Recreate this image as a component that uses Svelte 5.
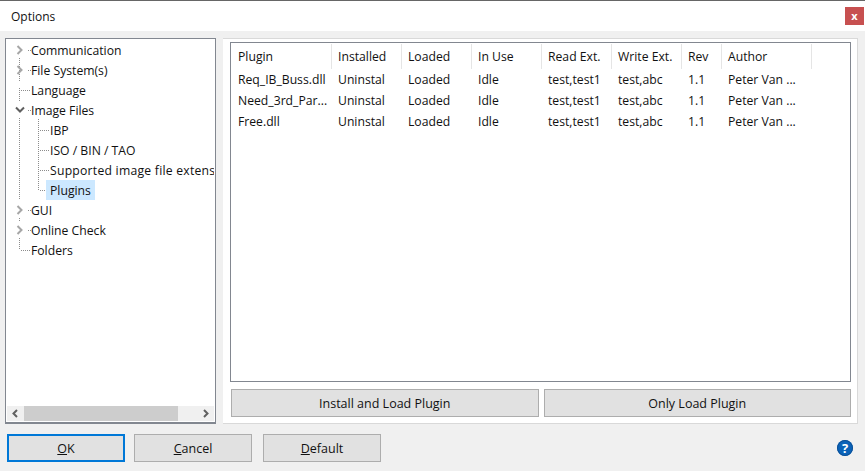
<script>
    const columns = [
        { label: 'Plugin', width: 101 },
        { label: 'Installed', width: 70 },
        { label: 'Loaded', width: 70 },
        { label: 'In Use', width: 70 },
        { label: 'Read Ext.', width: 70 },
        { label: 'Write Ext.', width: 70 },
        { label: 'Rev', width: 40 },
        { label: 'Author', width: 90 },
    ];
    const gridColumns = columns.map((c) => c.width + 'px').join(' ');

    const plugins = ['Req_IB_Buss.dll', 'Need_3rd_Par...', 'Free.dll'].map((name) => [
        name, 'Uninstal', 'Loaded', 'Idle', 'test,test1', 'test,abc', '1.1', 'Peter Van ...',
    ]);

    const tree = [
        { label: 'Communication', level: 0, arrow: 'closed' },
        { label: 'File System(s)', level: 0, arrow: 'closed' },
        { label: 'Language', level: 0 },
        { label: 'Image Files', level: 0, arrow: 'open' },
        { label: 'IBP', level: 1 },
        { label: 'ISO / BIN / TAO', level: 1 },
        { label: 'Supported image file extens', level: 1, long: true },
        { label: 'Plugins', level: 1, selected: true },
        { label: 'GUI', level: 0, arrow: 'closed' },
        { label: 'Online Check', level: 0, arrow: 'closed' },
        { label: 'Folders', level: 0 },
    ];
</script>

<div class="window">
    <header class="title">
        <span>Options</span>
        <button class="close">x</button>
    </header>

    <div class="content">
        <aside class="tree-box">
            <div class="tree">
                <svg class="guides" width="210" height="222" aria-hidden="true">
                    <g stroke="#8c8c8c" stroke-dasharray="1 1" fill="none" shape-rendering="crispEdges">
                        <path d="M19.5 18V42M19.5 48V62M19.5 78V160M19.5 178V182M19.5 198V210" />
                        <path d="M21 50.5H31M38.5 79V150M40 90.5H50M40 110.5H50M40 130.5H50M40 150.5H47" />
                        <path d="M21 210.5H31M28 10.5H31M28 30.5H31M28 70.5H31M28 170.5H31M28 190.5H31" />
                    </g>
                </svg>
                {#each tree as node}
                    <div class="node" class:sub={node.level === 1}>
                        {#if node.arrow === 'closed'}
                            <svg class="arrow" width="8" height="10" viewBox="0 0 8 10">
                                <path d="M1.5 1L5.5 5L1.5 9" stroke="#a6a6a6" stroke-width="2" fill="none" />
                            </svg>
                        {:else if node.arrow === 'open'}
                            <svg class="arrow open" width="10" height="8" viewBox="0 0 10 8">
                                <path d="M1 1.5L5 5.5L9 1.5" stroke="#5f5f5f" stroke-width="2" fill="none" />
                            </svg>
                        {/if}
                        <span class="label" class:selected={node.selected} class:long={node.long}>{node.label}</span>
                    </div>
                {/each}
            </div>
            <div class="hscroll">
                <svg width="17" height="15" viewBox="0 0 17 15">
                    <path d="M10 4L6.5 7.5L10 11" stroke="#606060" stroke-width="2" fill="none" />
                </svg>
                <div class="track"><div class="thumb"></div></div>
                <svg width="17" height="15" viewBox="0 0 17 15">
                    <path d="M7 4L10.5 7.5L7 11" stroke="#606060" stroke-width="2" fill="none" />
                </svg>
            </div>
        </aside>

        <section class="panel">
            <div class="table">
                <div class="row head" style="grid-template-columns: {gridColumns}">
                    {#each columns as col}
                        <div class="cell">{col.label}</div>
                    {/each}
                </div>
                {#each plugins as row}
                    <div class="row" style="grid-template-columns: {gridColumns}">
                        {#each row as value}
                            <div class="cell">{value}</div>
                        {/each}
                    </div>
                {/each}
            </div>
            <div class="actions">
                <button class="btn">Install and Load Plugin</button>
                <button class="btn">Only Load Plugin</button>
            </div>
        </section>
    </div>

    <footer class="footer">
        <button class="btn wide primary"><u>O</u>K</button>
        <button class="btn wide cancel"><u>C</u>ancel</button>
        <button class="btn wide default"><u>D</u>efault</button>
        <svg class="help" width="18" height="18" viewBox="0 0 18 18">
            <circle cx="9" cy="9" r="8" fill="#0a62b8" />
            <circle cx="9" cy="9" r="7.5" fill="none" stroke="#0b4f96" />
            <text x="9" y="13.5" text-anchor="middle" class="help-mark">?</text>
        </svg>
    </footer>
</div>

<style>
    :global(body) {
        background: #f0f0f0;
    }

    .window {
        width: 865px;
        height: 471px;
        box-sizing: border-box;
        border-top: 1px solid #666;
        background: #f0f0f0;
        font-family: "Open Sans", "Noto Sans", sans-serif;
        font-size: 12.2px;
        color: #111;
        display: flex;
        flex-direction: column;
        overflow: hidden;
    }

    .title {
        height: 30px;
        flex: none;
        background: #fff;
        display: flex;
        align-items: center;
        justify-content: space-between;
        padding: 0 1px 0 11px;
        font-size: 12px;
    }

    .close {
        width: 19px;
        height: 18px;
        border: 0;
        padding: 0 0 2px;
        background: #c75050;
        color: #fff;
        font-family: "Open Sans", sans-serif;
        font-size: 11px;
        font-weight: 700;
        line-height: 1;
    }

    .content {
        height: 386px;
        flex: none;
        margin: 7px 7px 0 5px;
        display: flex;
        gap: 7px;
    }

    .tree-box {
        width: 211px;
        box-sizing: border-box;
        border: 1px solid #828790;
        border-bottom-width: 2px;
        background: #fff;
        display: flex;
        flex-direction: column;
        padding: 0 1px;
    }

    .tree {
        flex: 1;
        position: relative;
        overflow: hidden;
        padding-top: 1px;
    }

    .guides {
        position: absolute;
        left: -7px;
        top: 1px;
    }

    .node {
        position: relative;
        height: 20px;
        line-height: 19px;
        padding-left: 23px;
        white-space: nowrap;
    }

    .node.sub {
        padding-left: 39px;
    }

    .label {
        display: inline-block;
        padding: 1px 4px 0 3px;
        position: relative;
    }

    .node.sub .label {
        padding-left: 4px;
    }

    .node:not(.sub) .label {
        margin-left: -2px;
    }

    .label.selected {
        background: #cce8ff;
    }

    .label.long {
        letter-spacing: 0.24px;
    }

    .arrow {
        position: absolute;
        left: 9px;
        top: 5px;
    }

    .arrow.open {
        left: 8px;
        top: 6px;
    }

    .hscroll {
        height: 15px;
        background: #f0f0f0;
        display: flex;
        margin-bottom: 1px;
    }

    .track {
        flex: 1;
    }

    .thumb {
        width: 154px;
        height: 100%;
        background: #cdcdcd;
    }

    .panel {
        width: 636px;
        box-sizing: border-box;
        background: #fff;
        border: 1px solid #d9d9d9;
        border-left-width: 0;
        padding: 3px 6px 6px 7px;
        display: flex;
        flex-direction: column;
    }

    .table {
        height: 341px;
        box-sizing: border-box;
        border: 1px solid #828790;
        padding-top: 1px;
    }

    .row {
        display: grid;
        height: 21px;
        line-height: 21px;
    }

    .row.head {
        height: 25px;
        line-height: 25px;
    }

    .row.head .cell {
        border-right: 1px solid #e5e5e5;
    }

    .cell {
        box-sizing: border-box;
        padding-left: 6px;
        white-space: nowrap;
        overflow: hidden;
    }

    .cell:first-child {
        padding-left: 7px;
    }

    .actions {
        display: flex;
        gap: 5px;
        margin: 7px 0 0 1px;
    }

    .actions .btn {
        flex: 1;
    }

    .btn {
        height: 28px;
        box-sizing: border-box;
        border: 1px solid #adadad;
        background: #e1e1e1;
        color: #111;
        font-family: inherit;
        font-size: 12.5px;
        padding: 0;
    }

    .footer {
        position: relative;
        display: flex;
        margin: 10px 0 0 7px;
    }

    .wide {
        width: 118px;
    }

    .primary {
        border: 2px solid #0078d7;
    }

    .cancel {
        margin-left: 9px;
    }

    .default {
        margin-left: 11px;
    }

    .help {
        margin: 5px 0 0 455px;
    }

    .help-mark {
        fill: #fff;
        font-family: "Open Sans", sans-serif;
        font-size: 13px;
        font-weight: 700;
    }
</style>
